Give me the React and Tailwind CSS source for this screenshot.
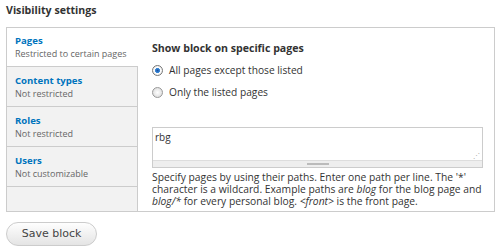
export default function App() {
  const font = { fontFamily: '"Open Sans", "Noto Sans", sans-serif' };
  const tabs = [
    { t: 'Pages', s: 'Restricted to certain pages', active: true },
    { t: 'Content types', s: 'Not restricted' },
    { t: 'Roles', s: 'Not restricted' },
    { t: 'Users', s: 'Not customizable' },
  ];
  return (
    <div className="w-[500px] h-[250px] bg-white px-[6px] pt-[3px] text-[#333] overflow-hidden" style={font}>
      <div className="text-[10.6px] font-bold leading-[14px] h-[24px]">Visibility settings</div>
      <div className="flex border border-[#ccc] h-[185px] w-[489px]">
        <div className="w-[131px] shrink-0 flex flex-col bg-[#f2f2f2] border-r border-[#ccc]">
          {tabs.map((tab) => (
            <div
              key={tab.t}
              className={
                tab.active
                  ? 'h-[39px] shrink-0 bg-white border-b border-[#ccc] -mr-px pl-[8px] pt-[7px]'
                  : 'h-[40px] shrink-0 border-b border-[#ccc] pl-[8px] pt-[8px]'
              }
            >
              <div className="text-[9.6px] font-bold text-[#0074bd] leading-[12px]">{tab.t}</div>
              <div className="text-[9px] text-[#666] leading-[14px] whitespace-nowrap">{tab.s}</div>
            </div>
          ))}
        </div>
        <div className="flex-1 min-w-0 pl-[14px] pt-[13px]">
          <div className="text-[10.6px] font-bold leading-[14px]">Show block on specific pages</div>
          <div className="flex items-center gap-[6px] mt-[8px] h-[14px]">
            <span className="w-[11px] h-[11px] shrink-0 rounded-full border border-[#777] bg-[radial-gradient(circle,#1a4fa0_0%,#3b8ad9_35%,#fff_45%,#ddd_100%)]"></span>
            <span className="text-[10.2px] leading-[14px]">All pages except those listed</span>
          </div>
          <div className="flex items-center gap-[6px] mt-[8px] h-[14px]">
            <span className="w-[11px] h-[11px] shrink-0 rounded-full border border-[#999] bg-[radial-gradient(circle,#fff_0%,#e6e6e6_60%,#ccc_100%)]"></span>
            <span className="text-[10.2px] leading-[14px]">Only the listed pages</span>
          </div>
          <div className="mt-[28px] w-[331px] border border-[#ccc]">
            <div className="h-[32px] bg-white relative px-[2px] pt-[3px] text-[10px] leading-[13px]">
              rbg
              <span className="absolute right-[2px] bottom-[1px] text-[7px] leading-[7px] text-[#aaa]">⋰</span>
            </div>
            <div className="h-[7px] bg-[#eee] border-t border-[#ddd] flex justify-center items-center">
              <div className="w-[22px] h-[2px] bg-[#bbb]"></div>
            </div>
          </div>
          <div className="mt-[3px] text-[10.3px] leading-[12px] w-[335px]">
            Specify pages by using their paths. Enter one path per line. The '*' character is a wildcard. Example paths are <em>blog</em> for the blog page and <em>blog/*</em> for every personal blog. <em>&lt;front&gt;</em> is the front page.
          </div>
        </div>
      </div>
      <div className="mt-[10px] w-[91px] h-[24px] rounded-full border border-[#ccc] bg-[linear-gradient(#fefefe,#e4e4e4)] flex items-center justify-center text-[11px] text-[#444]" style={{ fontFamily: '"DejaVu Sans", Verdana, sans-serif' }}>
        Save block
      </div>
    </div>
  );
}
